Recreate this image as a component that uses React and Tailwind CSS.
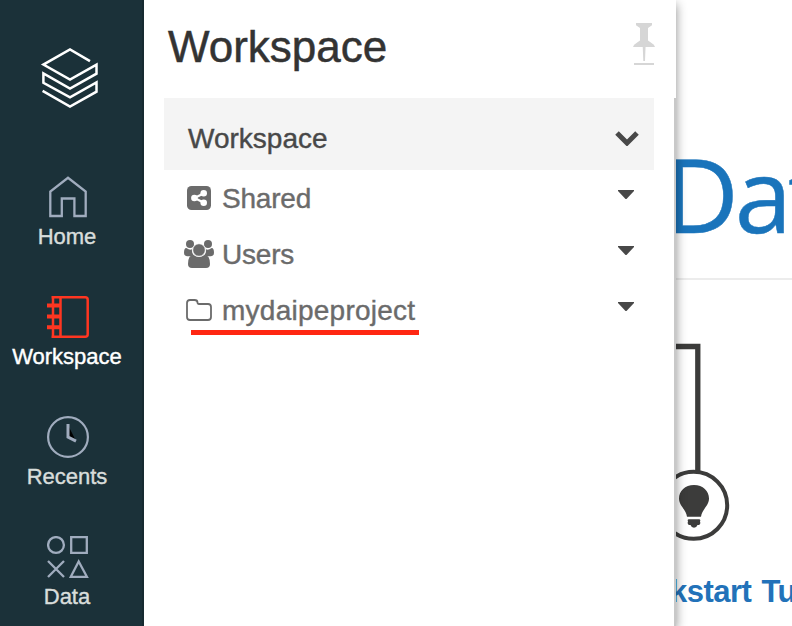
import React from 'react';

function Logo() {
  return (
    <svg className="block h-[62px] w-[60px]" viewBox="40 46 60 62" fill="none" stroke="#fff" strokeWidth="2.5">
      <path d="M90 61.2 70 49.4 43.4 64.6 70 79.6 96.5 64.6V73.7L70 88.5 43.4 73.3V82.8L70 97.3 96.5 82.4V91.7L70 106.5 42.6 90.8" />
    </svg>
  );
}

function HomeIcon() {
  return (
    <svg className="block h-[42px] w-[42px]" viewBox="0 0 42 42" fill="none" stroke="#a0acbe" strokeWidth="2.3">
      <path d="M3.3 40V15.6L21 1.8 38.7 15.6V40H27.4V22.5H14.8V40Z" />
    </svg>
  );
}

function WorkspaceIcon() {
  return (
    <svg className="block h-[42px] w-[42px]" viewBox="0 0 42 42" fill="none" stroke="#ff3621" strokeWidth="2.5">
      <path d="M4.500 1.300H38.200Q40.700 1.300 40.700 3.800V38.200Q40.700 40.700 38.200 40.700H4.500M6 1V41M13.500 1V41" />
      <path strokeWidth="4" d="M0 9.500H13M0 20.500H13M0 31.300H13" />
    </svg>
  );
}

function RecentsIcon() {
  return (
    <svg className="block h-[42px] w-[42px]" viewBox="0 0 42 42" fill="none">
      <path d="M22 11 28 23 22 20Z" fill="#000" />
      <circle cx="21" cy="21" r="19.9" stroke="#a0acbe" strokeWidth="2.2" />
      <path d="M21 8V21L29 25.2" stroke="#a0acbe" strokeWidth="3" />
    </svg>
  );
}

function DataIcon() {
  return (
    <svg className="block h-[42px] w-[42px]" viewBox="0 0 42 42" fill="none" stroke="#a0acbe" strokeWidth="2.3">
      <circle cx="9" cy="9" r="7.9" />
      <path d="M24.2 1.2H39.8V16.8H24.2ZM1 25 17 41M17 25 1 41M31.7 25.5 39.9 40.8H23.8Z" />
    </svg>
  );
}

function NavItem({ icon, label, active }) {
  return (
    <div className="flex h-[120px] shrink-0 flex-col items-center pr-2">
      <div className="pl-px">{icon}</div>
      <span className={'mt-1 text-[22px] leading-[30px] [-webkit-text-stroke:0.4px] ' + (active ? 'text-white' : 'text-[#d8dddb]')}>
        {label}
      </span>
    </div>
  );
}

function PinIcon() {
  return (
    <svg className="block h-11 w-6" viewBox="632 22 24 44" fill="#d6d6d6">
      <path d="M636 23h16v2.200l-4 2.800v12.500l3.500 2.500q3 1.500 3.500 4H633q.5-2.500 3.500-4l3.500-2.500V28l-4-2.800ZM642.700 46h2.900l-.6 15h-1.700ZM634 63h20v2h-20Z" />
    </svg>
  );
}

function ShareIcon() {
  return (
    <svg className="block h-6 w-6" viewBox="0 0 24 24">
      <rect width="24" height="24" rx="4.500" fill="#6b6b6b" />
      <path d="M17 7.200 7.500 12 17 16.800" fill="none" stroke="#fff" strokeWidth="2.200" />
      <g fill="#fff">
        <circle cx="16.700" cy="7.300" r="3.300" />
        <circle cx="7.400" cy="12" r="3.300" />
        <circle cx="16.700" cy="16.800" r="3.300" />
      </g>
    </svg>
  );
}

function UsersIcon() {
  return (
    <svg className="block h-7 w-[30px]" viewBox="0 0 30 28" fill="#6b6b6b">
      <circle cx="6" cy="4" r="4" />
      <circle cx="24" cy="4" r="4" />
      <path d="M2.300 8Q6 10.500 8 9.200 7.500 13 10 15.800 7 16 5.700 16.200H3Q0 16 0 13 0 8 2.300 8ZM27.700 8Q24 10.500 22 9.200 22.500 13 20 15.800 23 16 24.300 16.200H27Q30 16 30 13 30 8 27.700 8Z" />
      <path d="M9.500 15Q15 19 20.500 15 26 15 26 24 26 28 22 28H8Q4 28 4 24 4 15 9.500 15Z" />
      <circle cx="15" cy="10" r="6.300" stroke="#fff" strokeWidth="0.800" />
    </svg>
  );
}

function FolderIcon() {
  return (
    <svg className="block h-[22px] w-[26px]" viewBox="0 0 26 22" fill="none" stroke="#6b6b6b" strokeWidth="1.800">
      <path d="M1 4Q1 1 4 1H8.500Q11.500 1 11.500 3.500 11.500 5 13 5H22Q25 5 25 8V18Q25 21 22 21H4Q1 21 1 18Z" />
    </svg>
  );
}

function Row({ icon, label, underlined }) {
  return (
    <div className="flex h-14 items-center pl-5 text-[28px] leading-8 text-[#6b6b6b]">
      <div className="flex w-[30px] justify-center">{icon}</div>
      <div className={'relative ml-2 flex-1 pt-0.5 [-webkit-text-stroke:0.4px] ' + (underlined ? 'tracking-[0.25px]' : 'tracking-[-0.2px]')}>
        {label}
        {underlined && <span className="absolute -left-[31px] top-[37px] h-[5px] w-[228px] bg-[#ff2712]" />}
      </div>
      <svg className="mr-10 mb-2 block h-[9px] w-4" viewBox="0 0 16 9" fill="#484848">
        <path d="M0 0H16V1L8.500 9H7.500L0 1Z" />
      </svg>
    </div>
  );
}

function LightbulbNode() {
  return (
    <svg className="block h-[200px] w-[116px]" viewBox="676 343 116 200" fill="none">
      <path d="M670 346.500H697.800V472" stroke="#3c3c3b" strokeWidth="5.300" />
      <circle cx="693.700" cy="505.300" r="33.500" stroke="#3c3c3b" strokeWidth="4" fill="#fff" />
      <path d="M694 485C703 485 709 491 709 498.500 709 506 702 509 701 516.800H687C686 509 679 506 679 498.500 679 491 685 485 694 485ZM689 519.200H699Q701 519.200 700 521.500 701 524 699 525H697.500Q696.500 527.800 694 527.800 691.500 527.800 690.500 525H689Q687 524 688 521.500 687 519.200 689 519.200Z" fill="#3c3c3b" />
    </svg>
  );
}

export default function App() {
  return (
    <div className="flex h-[626px] w-[792px] overflow-hidden bg-white font-['Liberation_Sans',Arial,sans-serif]">
      <nav className="relative z-20 flex w-36 shrink-0 flex-col border-r-2 border-[#162a30] bg-[#1b3139] pt-[46px]">
        <div className="mb-[68px] pl-10">
          <Logo />
        </div>
        <NavItem icon={<HomeIcon />} label="Home" />
        <NavItem icon={<WorkspaceIcon />} label="Workspace" active />
        <NavItem icon={<RecentsIcon />} label="Recents" />
        <NavItem icon={<DataIcon />} label="Data" />
      </nav>

      <section className="z-10 flex w-[532px] shrink-0 flex-col bg-white shadow-[0_4px_10px_rgba(0,0,0,0.45)]">
        <header className="flex h-[98px] items-start justify-between pl-6 pr-5 pt-[22px]">
          <h1 className="text-[44px] leading-[50px] text-[#333] [-webkit-text-stroke:0.5px]">Workspace</h1>
          <PinIcon />
        </header>
        <div className="flex-1 border-r-2 border-[#c8c8c8] pl-5 pr-5">
          <div className="flex h-[72px] items-center justify-between bg-[#f4f4f4] pl-6 pr-[15px] pt-2.5 text-[28px] text-[#484848] [-webkit-text-stroke:0.4px]">
            Workspace
            <svg className="mb-px block h-[15px] w-6" viewBox="0 0 24 15" fill="none" stroke="#484848" strokeWidth="5">
              <path d="M2 2 12 12 22 2" />
            </svg>
          </div>
          <div className="-mr-5">
            <Row icon={<ShareIcon />} label="Shared" />
            <Row icon={<UsersIcon />} label="Users" />
            <Row icon={<FolderIcon />} label="mydaipeproject" underlined />
          </div>
        </div>
      </section>

      <main className="w-[116px] overflow-hidden whitespace-nowrap">
        <div className="h-[280px] border-b-2 border-[#ececec] pt-[123px]">
          <div className="-ml-3 font-['Open_Sans','Noto_Sans',sans-serif] text-[103px] leading-[140px] tracking-[-4px] text-[#1a74bb] [-webkit-text-stroke:0.5px]">
            Databricks
          </div>
        </div>
        <div className="mt-[63px]">
          <LightbulbNode />
        </div>
        <div className="-ml-[73px] mt-[29px] text-[31px] font-bold leading-10 tracking-[-0.5px] text-[#2272b9] [word-spacing:2px]">
          Quickstart Tutorial
        </div>
      </main>
    </div>
  );
}
